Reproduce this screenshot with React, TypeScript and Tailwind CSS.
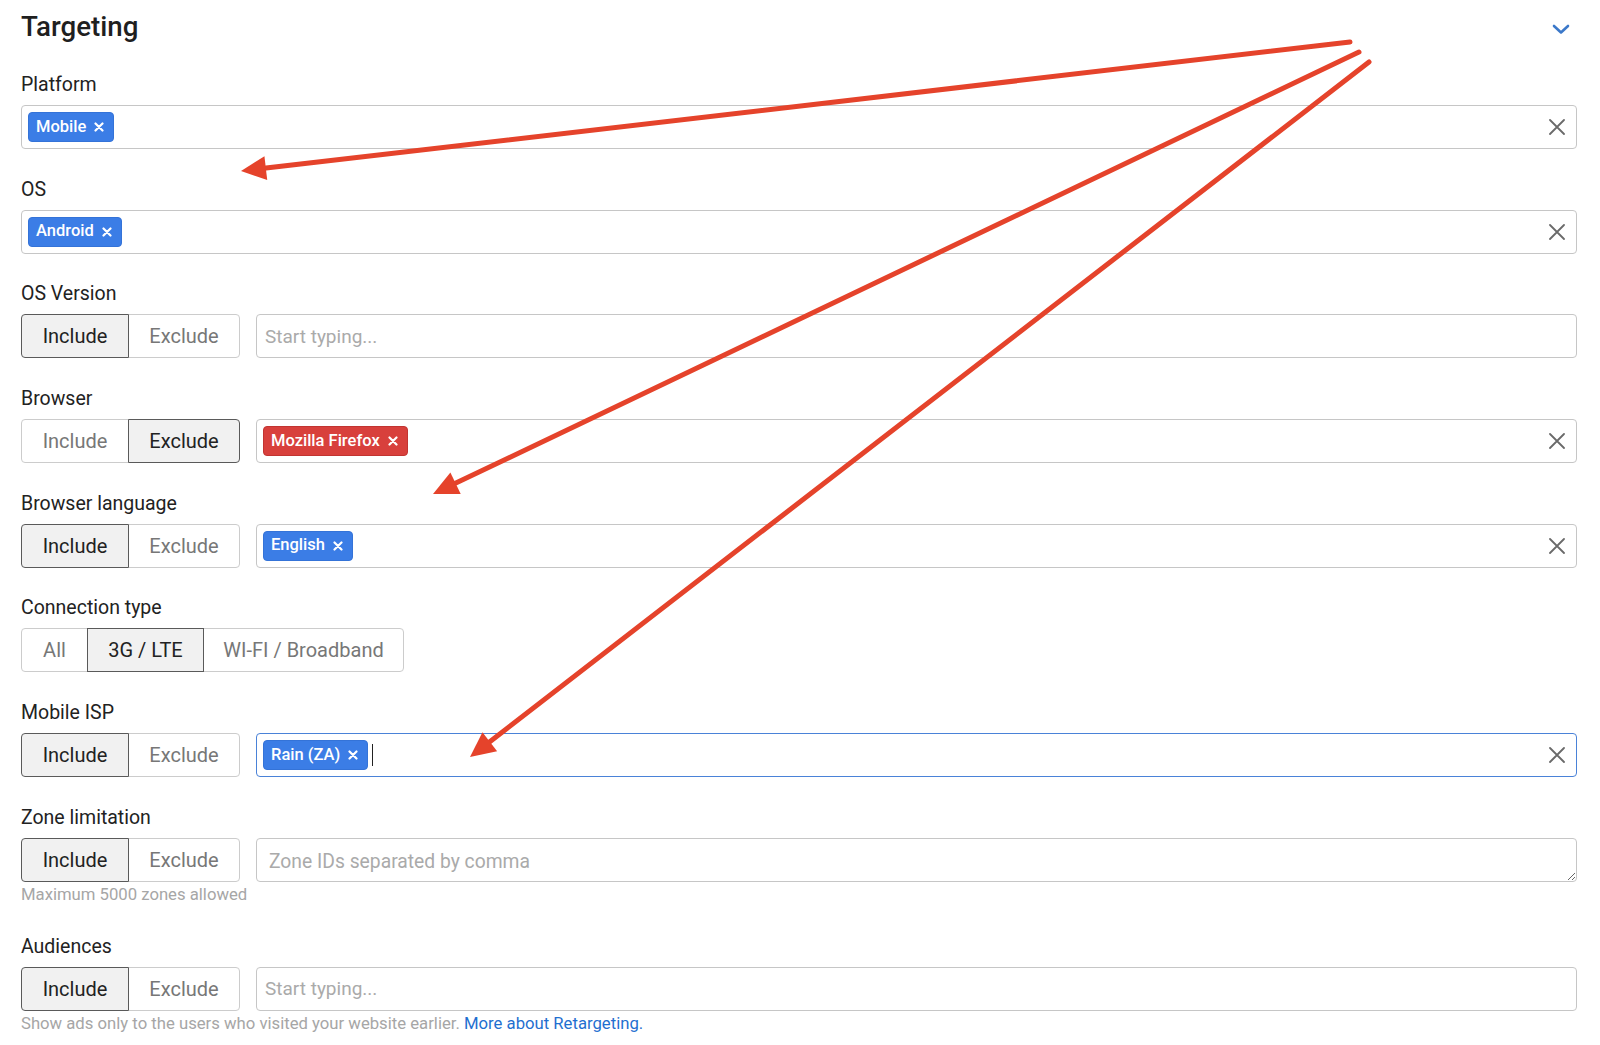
import React from 'react';

type Pt = [number, number];

const arrows: { from: Pt; to: Pt }[] = [
  { from: [1350, 42], to: [241, 171] },
  { from: [1359, 52], to: [433, 494] },
  { from: [1369, 62], to: [470, 757] },
];

const Arrow: React.FC<{ from: Pt; to: Pt }> = ({ from, to }) => {
  const dx = to[0] - from[0];
  const dy = to[1] - from[1];
  const len = Math.hypot(dx, dy);
  const ux = dx / len;
  const uy = dy / len;
  const head = 25;
  const half = 12;
  const bx = to[0] - ux * head;
  const by = to[1] - uy * head;
  const px = -uy * half;
  const py = ux * half;
  return (
    <g>
      <line x1={from[0]} y1={from[1]} x2={bx + ux * 2} y2={by + uy * 2} stroke="#e5432b" strokeWidth={5} strokeLinecap="round" />
      <polygon points={`${to[0]},${to[1]} ${bx + px},${by + py} ${bx - px},${by - py}`} fill="#e5432b" />
    </g>
  );
};

const ClearIcon = () => (
  <svg width="16" height="16" viewBox="0 0 16 16" className="shrink-0">
    <path d="M1 1 L15 15 M15 1 L1 15" stroke="#6a6a6a" strokeWidth="1.8" strokeLinecap="round" />
  </svg>
);

const Tag: React.FC<{ text: string; red?: boolean }> = ({ text, red }) => (
  <span
    className={`flex items-center h-[30px] rounded-[4px] pl-[7px] pr-[9px] gap-[8px] text-white text-[16.5px] font-medium border ${
      red ? 'bg-[#d8403c] border-[#c23431]' : 'bg-[#3b7de6] border-[#3473d8]'
    }`}
  >
    {text}
    <svg width="10" height="10" viewBox="0 0 10 10">
      <path d="M1.5 1.5 L8.5 8.5 M8.5 1.5 L1.5 8.5" stroke="#fff" strokeWidth="2.2" strokeLinecap="round" />
    </svg>
  </span>
);

const TagBox: React.FC<{ tags?: { text: string; red?: boolean }[]; focused?: boolean }> = ({ tags = [], focused }) => (
  <div
    className={`flex-1 flex items-center h-[44px] rounded-[4px] border bg-white pl-[6px] pr-[11px] ${
      focused ? 'border-[#4a82d8]' : 'border-[#c6c6c6]'
    }`}
  >
    <div className="flex-1 flex items-center">
      {tags.map(t => (
        <Tag key={t.text} text={t.text} red={t.red} />
      ))}
      {focused && <span className="ml-[4px] w-px h-[22px] bg-[#222]"></span>}
    </div>
    <ClearIcon />
  </div>
);

const TextBox: React.FC<{ placeholder: string }> = ({ placeholder }) => (
  <input
    readOnly
    placeholder={placeholder}
    className="flex-1 h-[44px] rounded-[4px] border border-[#c6c6c6] bg-white pl-[8px] text-[19px] text-[#222] placeholder:text-[#aaaaaa] outline-none"
  />
);

const Segmented: React.FC<{ options: { label: string; w: string }[]; active: number }> = ({ options, active }) => (
  <div className="flex h-[44px] shrink-0">
    {options.map((o, i) => {
      const isActive = i === active;
      const first = i === 0;
      const last = i === options.length - 1;
      return (
        <div
          key={o.label}
          className={`relative flex items-center justify-center h-full border text-[20px] ${o.w} ${first ? 'rounded-l-[4px]' : '-ml-px'} ${
            last ? 'rounded-r-[4px]' : ''
          } ${isActive ? 'z-10 bg-[#f1f1f1] border-[#5a5a5a] text-[#222]' : 'bg-white border-[#cccccc] text-[#777]'}`}
        >
          {o.label}
        </div>
      );
    })}
  </div>
);

const incExc = (active: number) => (
  <Segmented
    active={active}
    options={[
      { label: 'Include', w: 'w-[108px]' },
      { label: 'Exclude', w: 'w-[112px]' },
    ]}
  />
);

const Section: React.FC<{ label: string; children: React.ReactNode; help?: React.ReactNode }> = ({ label, children, help }) => (
  <section>
    <div className="text-[19.5px] leading-[24px] text-[#222] pt-[1px] mb-[8px]">{label}</div>
    <div className="flex items-center gap-[16px]">{children}</div>
    {help && <div className="mt-[2px] text-[16.7px] leading-[22px] text-[#a6a6a6]">{help}</div>}
  </section>
);

export default function App() {
  return (
    <div className="relative w-full h-[1045px] overflow-hidden bg-white font-['Roboto',sans-serif] pl-[21px] pr-[23px] pt-[10px]">
      <div className="flex items-center justify-between h-[34px]">
        <h1 className="text-[27.7px] leading-[34px] font-medium text-[#1f1f1f]">Targeting</h1>
        <svg width="18" height="12" viewBox="0 0 18 12" className="mr-[7px] mt-[3px]">
          <path d="M2 3 L9 9.5 L16 3" fill="none" stroke="#3b78c9" strokeWidth="2.6" strokeLinecap="round" strokeLinejoin="round" />
        </svg>
      </div>

      <div className="mt-[28px] flex flex-col gap-[27.7px]">
        <Section label="Platform">
          <TagBox tags={[{ text: 'Mobile' }]} />
        </Section>

        <Section label="OS">
          <TagBox tags={[{ text: 'Android' }]} />
        </Section>

        <Section label="OS Version">
          {incExc(0)}
          <TextBox placeholder="Start typing..." />
        </Section>

        <Section label="Browser">
          {incExc(1)}
          <TagBox tags={[{ text: 'Mozilla Firefox', red: true }]} />
        </Section>

        <Section label="Browser language">
          {incExc(0)}
          <TagBox tags={[{ text: 'English' }]} />
        </Section>

        <Section label="Connection type">
          <Segmented
            active={1}
            options={[
              { label: 'All', w: 'w-[67px]' },
              { label: '3G / LTE', w: 'w-[117px]' },
              { label: 'WI-FI / Broadband', w: 'w-[201px]' },
            ]}
          />
        </Section>

        <Section label="Mobile ISP">
          {incExc(0)}
          <TagBox tags={[{ text: 'Rain (ZA)' }]} focused />
        </Section>

        <Section label="Zone limitation" help="Maximum 5000 zones allowed">
          {incExc(0)}
          <textarea
            readOnly
            placeholder="Zone IDs separated by comma"
            className="flex-1 h-[44px] rounded-[4px] border border-[#c6c6c6] bg-white pl-[12px] pt-[10px] text-[19.3px] leading-[26px] placeholder:text-[#aaaaaa] outline-none"
          />
        </Section>

        <Section
          label="Audiences"
          help={
            <>
              Show ads only to the users who visited your website earlier.{' '}
              <span className="text-[#1f6fd0]">More about Retargeting.</span>
            </>
          }
        >
          {incExc(0)}
          <TextBox placeholder="Start typing..." />
        </Section>
      </div>

      <svg className="absolute inset-0 w-full h-full pointer-events-none z-20" width="1600" height="1045">
        {arrows.map((a, i) => (
          <Arrow key={i} from={a.from} to={a.to} />
        ))}
      </svg>
    </div>
  );
}
